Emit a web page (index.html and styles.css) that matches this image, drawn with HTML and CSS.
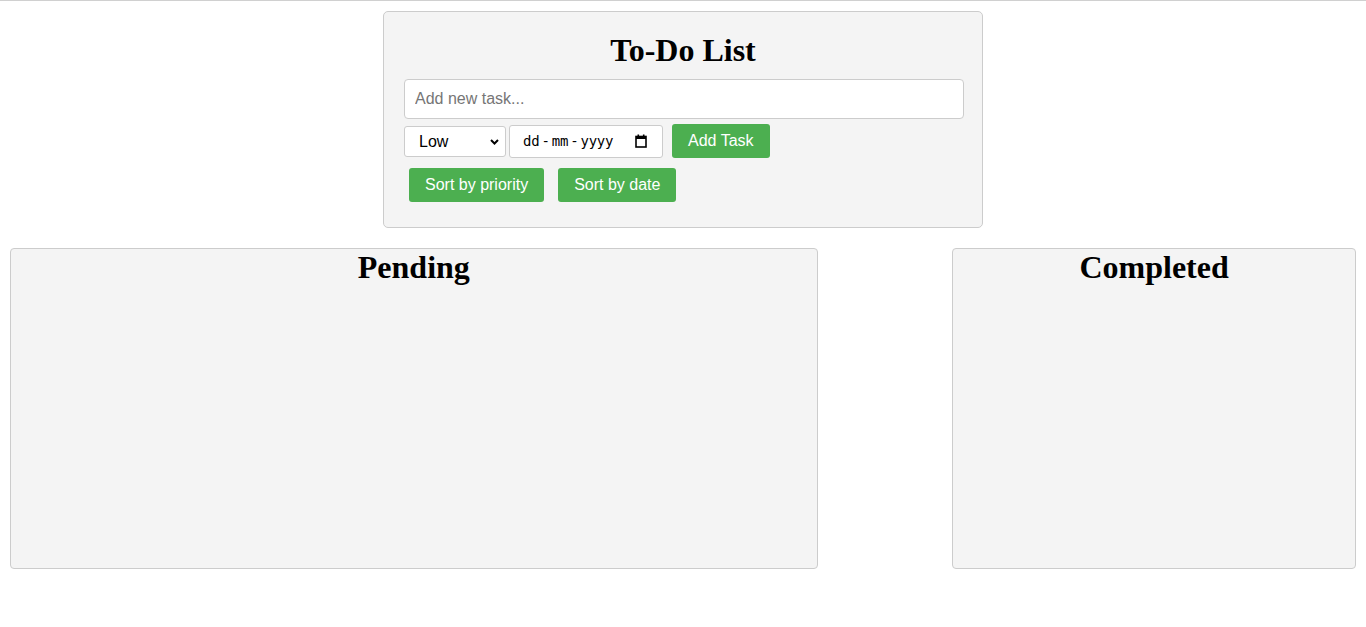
FILE: index.html
```html
<!DOCTYPE html>
<html lang="en">
<head>
<meta charset="utf-8">
<title>To-Do List</title>
<link rel="stylesheet" href="styles.css">
</head>
<body>
<div class="top-rule"></div>
<div class="page">
  <div class="todo-box">
    <h1 class="title">To-Do List</h1>
    <input class="task-input" type="text" placeholder="Add new task...">
    <div class="controls">
      <div class="select-wrap">
        <select class="priority">
          <option>Low</option>
          <option>Medium</option>
          <option>High</option>
        </select>
        <svg class="chev" width="9" height="6" viewBox="0 0 9 6"><path d="M1 1 L4.5 4.5 L8 1" fill="none" stroke="#000" stroke-width="2"/></svg>
      </div>
      <div class="date-field">
        <span class="date-text">dd<span class="sep">-</span>mm<span class="sep">-</span>yyyy</span>
        <svg class="cal" width="12" height="14" viewBox="0 0 12 14"><rect x="1" y="2.5" width="10" height="10.5" fill="none" stroke="#000" stroke-width="1.6"/><rect x="1" y="2" width="10" height="3" fill="#000"/><rect x="2.5" y="0.5" width="1.6" height="2.5" fill="#000"/><rect x="7.9" y="0.5" width="1.6" height="2.5" fill="#000"/></svg>
      </div>
      <button class="btn add-btn">Add Task</button>
    </div>
    <div class="sort-row">
      <button class="btn">Sort by priority</button>
      <button class="btn">Sort by date</button>
    </div>
  </div>
  <div class="lists">
    <div class="panel pending">
      <h1 class="panel-title">Pending</h1>
    </div>
    <div class="panel completed">
      <h1 class="panel-title">Completed</h1>
    </div>
  </div>
</div>
</body>
</html>
```
FILE: styles.css
```css
html, body {
  margin: 0;
  padding: 0;
  background: #fff;
  font-family: "Liberation Serif", "Times New Roman", serif;
}
.top-rule {
  height: 1px;
  background: #d0d0d0;
}
.page {
  padding: 10px 10px 0 10px;
}
.todo-box {
  box-sizing: border-box;
  width: 600px;
  margin: 0 auto;
  padding: 20px;
  background: #f4f4f4;
  border: 1px solid #ccc;
  border-radius: 5px;
}
.title {
  margin: 0 0 10px 0;
  font-size: 32px;
  font-weight: bold;
  text-align: center;
  line-height: 37px;
}
.task-input {
  display: block;
  box-sizing: border-box;
  width: calc(100% + 2px);
  height: 40px;
  padding: 10px;
  font-family: "Liberation Sans", Arial, sans-serif;
  font-size: 16px;
  border: 1px solid #ccc;
  border-radius: 4px;
  background: #fff;
  outline: none;
}
.task-input::placeholder {
  color: #767676;
}
.controls {
  display: flex;
  align-items: center;
  margin-top: 5px;
}
.select-wrap {
  position: relative;
  width: 102px;
  height: 31px;
}
.priority {
  appearance: none;
  -webkit-appearance: none;
  box-sizing: border-box;
  width: 102px;
  height: 31px;
  padding: 0 0 0 14px;
  font-family: "Liberation Sans", Arial, sans-serif;
  font-size: 16px;
  color: #000;
  background: #fff;
  border: 1px solid #ccc;
  border-radius: 3px;
}
.chev {
  position: absolute;
  right: 7px;
  top: 13px;
  pointer-events: none;
}
.date-field {
  box-sizing: border-box;
  display: flex;
  align-items: center;
  justify-content: space-between;
  width: 154px;
  height: 33px;
  margin-left: 3px;
  padding: 0 15px 0 13px;
  background: #fff;
  border: 1px solid #ccc;
  border-radius: 3px;
}
.date-text {
  font-family: "DejaVu Sans Mono", "Liberation Mono", monospace;
  font-size: 14px;
  letter-spacing: -0.2px;
  color: #000;
}
.sep {
  margin: 0 2px;
}
.cal {
  display: block;
}
.btn {
  box-sizing: border-box;
  height: 34px;
  padding: 0 16px;
  font-family: "Liberation Sans", Arial, sans-serif;
  font-size: 16px;
  color: #fff;
  background: #4caf50;
  border: none;
  border-radius: 3px;
  cursor: pointer;
}
.add-btn {
  margin-left: 9px;
}
.sort-row {
  display: flex;
  gap: 14px;
  margin-top: 10px;
  padding: 0 5px 5px 5px;
}
.lists {
  display: flex;
  justify-content: space-between;
  margin-top: 20px;
}
.panel {
  box-sizing: border-box;
  height: 321px;
  background: #f4f4f4;
  border: 1px solid #ccc;
  border-radius: 4px;
}
.pending {
  width: 60%;
}
.completed {
  width: 30%;
}
.panel-title {
  margin: 0;
  font-size: 32px;
  font-weight: bold;
  text-align: center;
  line-height: 37px;
}
```
